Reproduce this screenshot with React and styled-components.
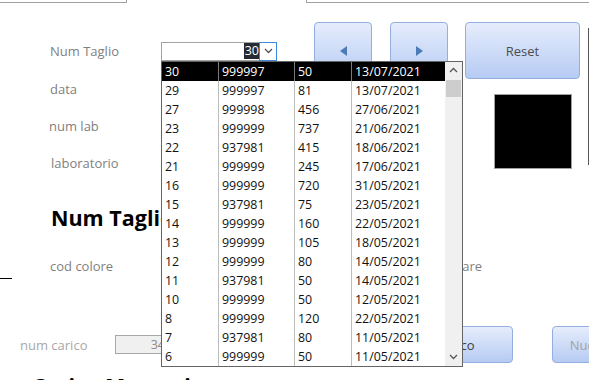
import React from 'react'
import styled, { createGlobalStyle } from 'styled-components'

const GlobalStyle = createGlobalStyle`
  html, body { margin: 0; padding: 0; background: #fff; }
  body { font-family: "Open Sans", "Noto Sans", sans-serif; }
  #root { width: 589px; height: 380px; overflow: hidden; }
  * { box-sizing: border-box; }
`

const rows = [
  ['30', '999997', '50', '13/07/2021'],
  ['29', '999997', '81', '13/07/2021'],
  ['27', '999998', '456', '27/06/2021'],
  ['23', '999999', '737', '21/06/2021'],
  ['22', '937981', '415', '18/06/2021'],
  ['21', '999999', '245', '17/06/2021'],
  ['16', '999999', '720', '31/05/2021'],
  ['15', '937981', '75', '23/05/2021'],
  ['14', '999999', '160', '22/05/2021'],
  ['13', '999999', '105', '18/05/2021'],
  ['12', '999999', '80', '14/05/2021'],
  ['11', '937981', '50', '14/05/2021'],
  ['10', '999999', '50', '12/05/2021'],
  ['8', '999999', '120', '22/05/2021'],
  ['7', '937981', '80', '11/05/2021'],
  ['6', '999999', '50', '11/05/2021'],
]

function Chevron({ up }) {
  return (
    <svg width="9" height="6" viewBox="0 0 9 6">
      <polyline
        points={up ? '1,5 4.5,1.5 8,5' : '1,1 4.5,4.5 8,1'}
        fill="none"
        stroke="#555"
        strokeWidth="1.3"
      />
    </svg>
  )
}

function App() {
  return (
    <Page>
      <GlobalStyle />
      <TopStrip>
        <TopBox $w={127} $side="right" />
        <TopBox $w={283} $side="left" $ml={179} />
      </TopStrip>

      <Block>
        <MainColumn>
          <ControlRow>
            <FieldLabel $w={111}>Num Taglio</FieldLabel>
            <Combo>
              <ComboField>
                <ComboSel>30</ComboSel>
              </ComboField>
              <ComboButton>
                <Chevron />
              </ComboButton>
              <DropList>
                <ListRows>
                  {rows.map((r, i) => (
                    <ListRow key={i} $selected={i === 0}>
                      {r.map((c, j) => (
                        <Cell key={j} $first={j === 0} $selected={i === 0}>
                          {c}
                        </Cell>
                      ))}
                    </ListRow>
                  ))}
                </ListRows>
                <ScrollBar>
                  <ScrollArrow><Chevron up /></ScrollArrow>
                  <ScrollThumb />
                  <ScrollTrack />
                  <ScrollArrow><Chevron /></ScrollArrow>
                </ScrollBar>
              </DropList>
            </Combo>
            <NavButton $ml={37}>
              <Arrow $dir="left" />
            </NavButton>
            <NavButton $ml={18}>
              <Arrow $dir="right" />
            </NavButton>
            <ResetButton>Reset</ResetButton>
          </ControlRow>

          <InfoRow>
            <LabelStack>
              <FieldLabel>data</FieldLabel>
              <FieldLabel $dx={-1}>num lab</FieldLabel>
              <FieldLabel $dx={1}>laboratorio</FieldLabel>
            </LabelStack>
            <Swatch />
          </InfoRow>
        </MainColumn>
        <EdgeLine />
      </Block>

      <Heading $ml={51} $mt={31}>Num Taglio</Heading>

      <ColorRow>
        <FieldLabel>cod colore</FieldLabel>
        <RightLabel>colore da usare</RightLabel>
      </ColorRow>

      <Rule />

      <BottomRow>
        <FieldLabel $w={95} $light>num carico</FieldLabel>
        <ReadOnlyInput>34</ReadOnlyInput>
        <ActionButton $ml={230}>Carico</ActionButton>
        <ActionButton $ml={39} $disabled>Nuovo carico</ActionButton>
      </BottomRow>

      <Heading $ml={32} $mt={8}>Carico Magazzino</Heading>
    </Page>
  )
}

export default App

const Page = styled.div`
  width: 589px;
  height: 380px;
  overflow: hidden;
  background: #fff;
  display: flex;
  flex-direction: column;
`

const TopStrip = styled.div`
  display: flex;
  height: 4px;
  flex-shrink: 0;
`

const TopBox = styled.div`
  width: ${p => p.$w}px;
  margin-left: ${p => p.$ml || 0}px;
  height: 3px;
  border-bottom: 1px solid #a0a0a0;
  border-${p => p.$side}: 1px solid #a0a0a0;
`

const Block = styled.div`
  display: flex;
  margin-top: 18px;
  flex-shrink: 0;
`

const MainColumn = styled.div`
  width: 588px;
  display: flex;
  flex-direction: column;
`

const EdgeLine = styled.div`
  width: 1px;
  height: 137px;
  margin-top: 6px;
  background: #555;
`

const ControlRow = styled.div`
  display: flex;
  align-items: center;
  height: 58px;
  padding-left: 50px;
`

const FieldLabel = styled.div`
  width: ${p => (p.$w ? `${p.$w}px` : 'auto')};
  flex-shrink: 0;
  margin-left: ${p => p.$dx || 0}px;
  font-size: 13px;
  line-height: 18px;
  color: ${p => (p.$light ? '#a8a8a8' : '#7f7f7f')};
  white-space: nowrap;
`

const Combo = styled.div`
  position: relative;
  display: flex;
  width: 116px;
  height: 19px;
  z-index: 5;
`

const ComboField = styled.div`
  flex: 1;
  display: flex;
  justify-content: flex-end;
  align-items: center;
  background: #fff;
  border: 1px solid #a3a3a3;
  border-right: none;
  padding: 1px 0;
`

const ComboSel = styled.span`
  background: #242b35;
  color: #fff;
  font-size: 12.5px;
  line-height: 16px;
  padding: 0 0 0 1px;
`

const ComboButton = styled.div`
  width: 18px;
  display: flex;
  align-items: center;
  justify-content: center;
  background: #fff;
  border: 1px solid #3b8be0;
`

const DropList = styled.div`
  position: absolute;
  top: 19px;
  left: 0;
  width: 302px;
  height: 306px;
  display: flex;
  background: #fff;
  border: 1px solid #646464;
`

const ListRows = styled.div`
  width: 283px;
  display: flex;
  flex-direction: column;
`

const ListRow = styled.div`
  display: grid;
  grid-template-columns: 56px 76px 57px 94px;
  height: 19px;
  background: ${p => (p.$selected ? '#000' : '#fff')};
  color: ${p => (p.$selected ? '#fff' : '#111')};
`

const Cell = styled.div`
  padding-left: 3px;
  border-left: ${p => (p.$first ? 'none' : `1px solid ${p.$selected ? '#7a7a7a' : '#bdbdbd'}`)};
  font-size: 12.4px;
  line-height: 19px;
  white-space: nowrap;
`

const ScrollBar = styled.div`
  width: 17px;
  display: flex;
  flex-direction: column;
  background: #f0f0f0;
`

const ScrollArrow = styled.div`
  height: 17px;
  display: flex;
  align-items: center;
  justify-content: center;
`

const ScrollThumb = styled.div`
  height: 17px;
  margin: 1px 1px 0;
  background: #cdcdcd;
`

const ScrollTrack = styled.div`
  flex: 1;
`

const buttonSkin = `
  border: 1px solid #93afe0;
  border-radius: 4px;
  background: linear-gradient(#e6edfc, #b6cbf3);
  display: flex;
  align-items: center;
  justify-content: center;
  flex-shrink: 0;
  font-size: 13px;
`

const NavButton = styled.div`
  ${buttonSkin}
  align-self: flex-start;
  width: 58px;
  height: 57px;
  margin-left: ${p => p.$ml}px;
`

const Arrow = styled.div`
  width: 0;
  height: 0;
  border-top: 5.5px solid transparent;
  border-bottom: 5.5px solid transparent;
  ${p => (p.$dir === 'left' ? 'border-right' : 'border-left')}: 7px solid #4a7db8;
  margin-top: 1px;
`

const ResetButton = styled.div`
  ${buttonSkin}
  align-self: flex-start;
  width: 115px;
  height: 57px;
  margin-left: 17px;
  color: #4d4d4d;
`

const InfoRow = styled.div`
  display: flex;
  padding-left: 50px;
`

const LabelStack = styled.div`
  display: flex;
  flex-direction: column;
  gap: 19px;
`

const Swatch = styled.div`
  width: 78px;
  height: 75px;
  margin: 14px 16px 0 auto;
  background: #000;
  border: 1px solid #a0a0a0;
`

const Heading = styled.div`
  margin: ${p => p.$mt}px 0 0 ${p => p.$ml}px;
  font-size: 21.5px;
  font-weight: 700;
  line-height: 30px;
  color: #000;
  white-space: nowrap;
  flex-shrink: 0;
`

const ColorRow = styled.div`
  display: flex;
  margin-top: 24px;
  padding-left: 50px;
  flex-shrink: 0;
`

const RightLabel = styled.div`
  margin-left: auto;
  margin-right: 107px;
  font-size: 13px;
  line-height: 18px;
  color: #7f7f7f;
  white-space: nowrap;
`

const Rule = styled.div`
  width: 12px;
  height: 1px;
  margin-top: 3px;
  background: #000;
  flex-shrink: 0;
`

const BottomRow = styled.div`
  display: flex;
  align-items: center;
  height: 37px;
  margin-top: 47px;
  padding-left: 20px;
  flex-shrink: 0;
`

const ReadOnlyInput = styled.div`
  width: 53px;
  height: 19px;
  flex-shrink: 0;
  background: #f0f0f0;
  border: 1px solid #a8a8a8;
  text-align: right;
  padding-right: 2px;
  font-size: 12.5px;
  line-height: 17px;
  color: #8a8a8a;
`

const ActionButton = styled.div`
  ${buttonSkin}
  width: 115px;
  height: 37px;
  margin-left: ${p => p.$ml}px;
  color: ${p => (p.$disabled ? '#a3a3a3' : '#404040')};
  white-space: nowrap;
`
